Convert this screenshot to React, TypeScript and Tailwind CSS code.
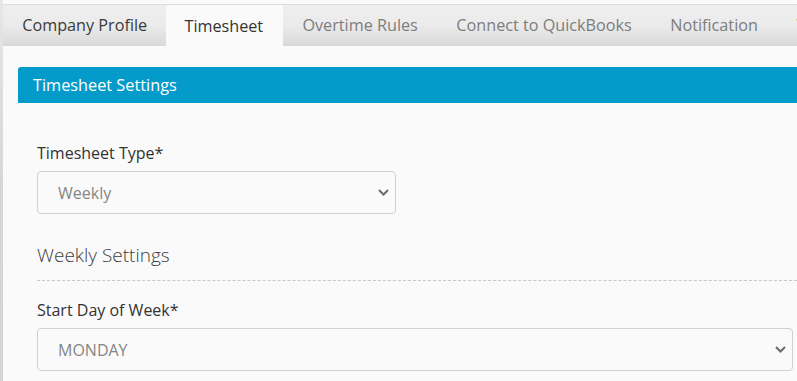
import React from "react";

const tabs = [
  { label: "Company Profile", tone: "text-[#3a3a3a]" },
  { label: "Timesheet", active: true },
  { label: "Overtime Rules", tone: "text-[#7d7d7d]" },
  { label: "Connect to QuickBooks", tone: "text-[#7d7d7d]" },
  { label: "Notification", tone: "text-[#7d7d7d]" },
  { label: "Time Off", tone: "text-[#7d7d7d]" },
];

function Chevron() {
  return (
    <svg width="11" height="7" viewBox="0 0 11 7" className="shrink-0">
      <path d="M1 1l4.5 4.5L10 1" fill="none" stroke="#6b6b6b" strokeWidth="2" />
    </svg>
  );
}

function SelectBox({ value, className }: { value: string; className: string }) {
  return (
    <div
      className={`flex h-[43px] items-center justify-between rounded-[4px] border border-[#d0d0d0] bg-[#fafafa] pl-[20px] pr-[6px] text-[16px] text-[#858585] ${className}`}
    >
      <span>{value}</span>
      <Chevron />
    </div>
  );
}

export default function App() {
  return (
    <div className="flex h-[381px] w-[797px] overflow-hidden bg-[#fafafa] font-['Open_Sans',sans-serif]">
      <div className="w-[3px] shrink-0 bg-gradient-to-b from-[#e6e6e6] via-[#d6d6d6] to-[#d4d4d4]" />
      <div className="flex min-w-0 flex-1 flex-col">
        <nav className="relative mt-[4px] flex h-[42px] shrink-0 overflow-hidden border-t border-[#dcdcdc] bg-gradient-to-b from-[#eeeeee] via-[#ebebeb] to-[#d9d9d9]">
          {tabs.map((t) =>
            t.active ? (
              <div
                key={t.label}
                className="relative -mt-[3px] flex h-[45px] shrink-0 items-center border-t-2 border-[#0aa0cf] bg-[#fafafa] pl-[18px] pr-[20px] pt-[2px] text-[16.2px] text-[#333333]"
              >
                {t.label}
              </div>
            ) : (
              <div
                key={t.label}
                className={`flex shrink-0 items-center whitespace-nowrap px-[19.3px] text-[16.2px] ${t.tone}`}
              >
                {t.label}
              </div>
            )
          )}
        </nav>

        <section className="flex flex-col pl-[15px] pt-[21px]">
          <div className="flex h-[36px] items-center rounded-tl-[3px] bg-[#049bca] pl-[15px] text-[16.3px] text-white">
            Timesheet Settings
          </div>

          <div className="flex flex-col pl-[19px] pt-[40px]">
            <label className="text-[16px] leading-[21px] text-[#333333]">Timesheet Type*</label>
            <SelectBox value="Weekly" className="mt-[7px] w-[359px]" />

            <h3 className="mt-[28px] text-[19px] font-light leading-[26px] text-[#3d3d3d]">Weekly Settings</h3>
            <div className="mt-[12px] border-t border-dashed border-[#c8c8c8]" />

            <label className="mt-[19px] text-[16px] leading-[21px] text-[#333333]">Start Day of Week*</label>
            <SelectBox value="MONDAY" className="mr-[4px] mt-[7px]" />
          </div>
        </section>
      </div>
    </div>
  );
}
